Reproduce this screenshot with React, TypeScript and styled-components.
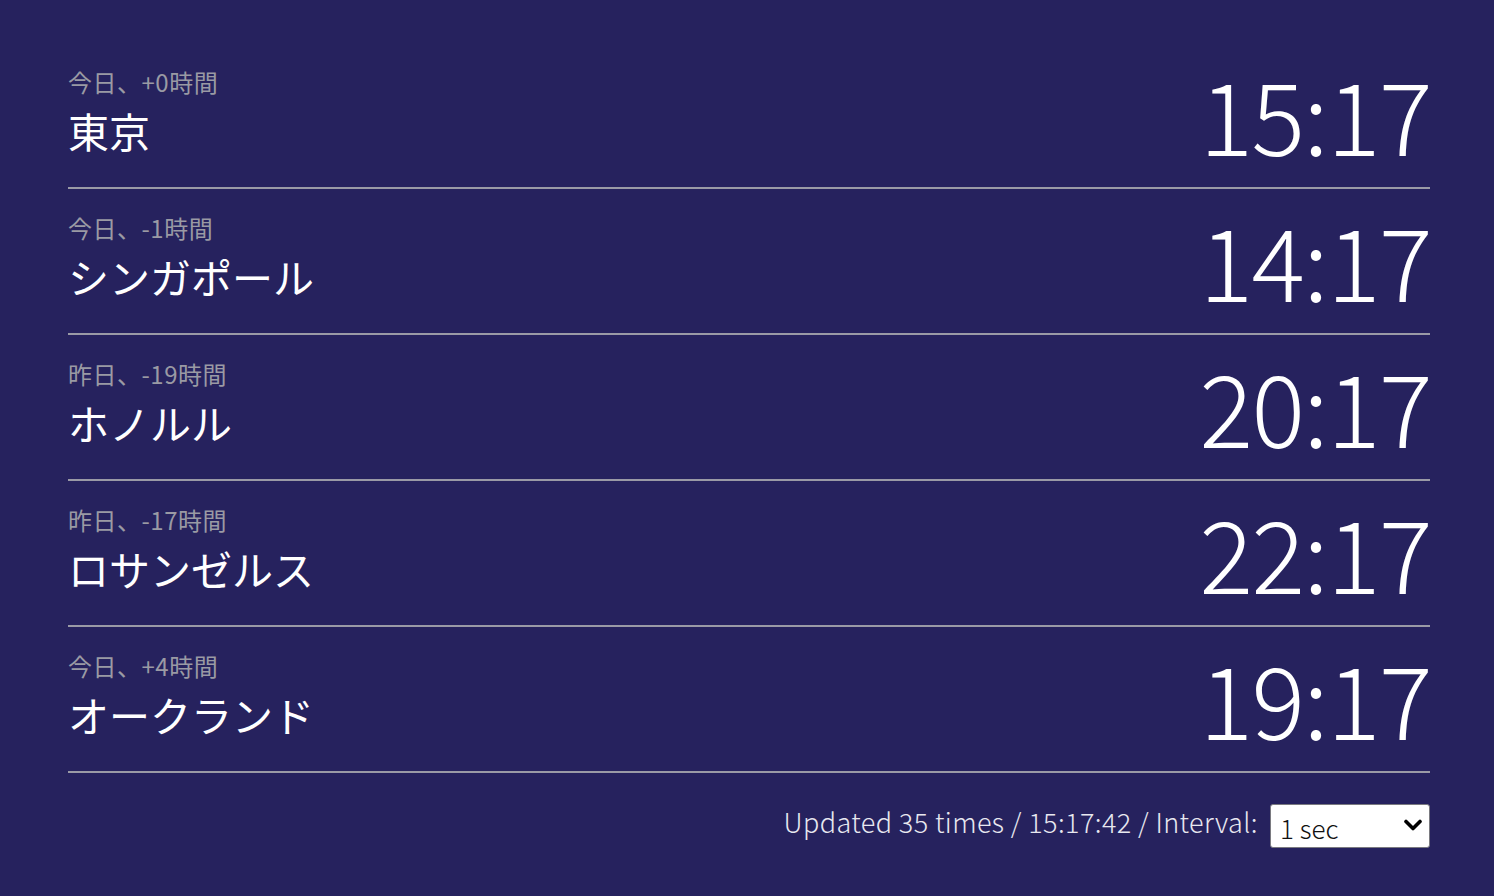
import styled, { createGlobalStyle } from 'styled-components';

const GlobalStyle = createGlobalStyle`
  html, body {
    margin: 0;
    padding: 0;
    background-color: #26225e;
  }
  body {
    font-family: 'Noto Sans CJK JP', 'Noto Sans', sans-serif;
    color: #ffffff;
  }
`;

const Board = styled.div`
  min-height: 896px;
  box-sizing: border-box;
  padding: 43px 64px 0 68px;
`;

const Row = styled.div`
  display: flex;
  align-items: flex-start;
  justify-content: space-between;
  height: 146px;
  box-sizing: border-box;
  border-bottom: 2px solid #9a9aa6;
`;

const Place = styled.div`
  display: flex;
  flex-direction: column;
  gap: 8px;
  padding-top: 23px;
`;

const Offset = styled.div`
  font-size: 24px;
  line-height: 32px;
  color: #9a9aa4;
  letter-spacing: 0.5px;
`;

const City = styled.div`
  font-size: 41px;
  line-height: 48px;
  color: #ffffff;
`;

const Clock = styled.div`
  font-size: 100px;
  font-weight: 300;
  line-height: 100px;
  letter-spacing: -1.5px;
  margin-top: 20px;
  margin-right: -1px;
`;

const Footer = styled.div`
  display: flex;
  align-items: center;
  justify-content: flex-end;
  gap: 12px;
  margin-top: 31px;
  font-size: 27px;
  font-weight: 300;
  letter-spacing: 0.4px;
  color: #e8e8f0;
`;

const Status = styled.span`
  line-height: 1;
  padding-bottom: 9px;
`;

const SelectWrap = styled.div`
  position: relative;
  display: flex;
`;

const Select = styled.select`
  appearance: none;
  width: 160px;
  height: 44px;
  font-family: 'Noto Sans CJK JP', 'Noto Sans', sans-serif;
  font-size: 26px;
  font-weight: 300;
  color: #111;
  background: #fff;
  border: 1px solid #7a7a80;
  border-radius: 3px;
  padding: 2px 8px 0 9px;
  outline: none;
`;

const Chevron = styled.svg`
  position: absolute;
  right: 8px;
  top: 15px;
  width: 18px;
  height: 13px;
  pointer-events: none;
`;

const zones = [
  { offset: '今日、+0時間', city: '東京', time: '15:17' },
  { offset: '今日、-1時間', city: 'シンガポール', time: '14:17' },
  { offset: '昨日、-19時間', city: 'ホノルル', time: '20:17' },
  { offset: '昨日、-17時間', city: 'ロサンゼルス', time: '22:17' },
  { offset: '今日、+4時間', city: 'オークランド', time: '19:17' },
];

const App: React.FC = () => {
  return (
    <>
      <GlobalStyle />
      <Board>
        {zones.map((z) => (
          <Row key={z.city}>
            <Place>
              <Offset>{z.offset}</Offset>
              <City>{z.city}</City>
            </Place>
            <Clock>{z.time}</Clock>
          </Row>
        ))}
        <Footer>
          <Status>Updated 35 times / 15:17:42 / Interval:</Status>
          <SelectWrap>
            <Select defaultValue='1'>
              <option value='1'>1 sec</option>
              <option value='5'>5 sec</option>
              <option value='10'>10 sec</option>
            </Select>
            <Chevron viewBox='0 0 18 13'>
              <path d='M2 2.5 L9 9.5 L16 2.5' fill='none' stroke='#000' strokeWidth='3.6' strokeLinecap='round' strokeLinejoin='round' />
            </Chevron>
          </SelectWrap>
        </Footer>
      </Board>
    </>
  );
};

export default App;
